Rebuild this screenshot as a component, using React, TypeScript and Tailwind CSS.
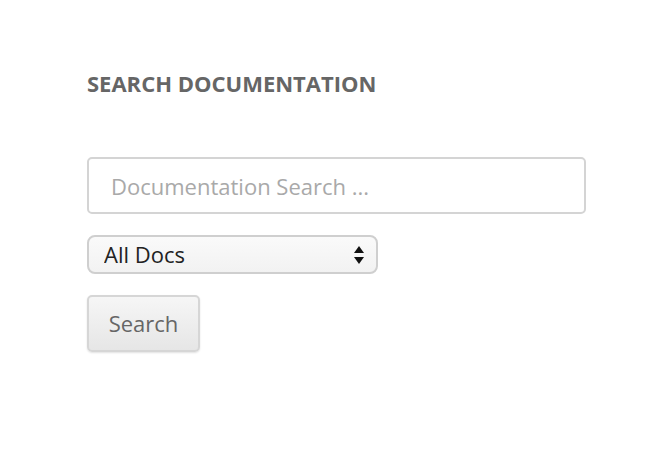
import React from 'react';

export default function App() {
  return (
    <div className="min-h-[454px] w-[656px] bg-white pl-[87px] pt-[66px] font-['Open_Sans',sans-serif]">
      <h2 className="text-[22px] font-bold uppercase leading-[34px] text-[#666666]">
        Search Documentation
      </h2>

      <form className="mt-[57px] flex flex-col items-start" onSubmit={(e) => e.preventDefault()}>
        <input
          type="text"
          placeholder="Documentation Search ..."
          className="h-[57px] w-[499px] rounded-[5px] border-2 border-[#d4d4d4] bg-white px-[22px] text-[22px] text-[#555] outline-none placeholder:text-[#a9a9a9]"
        />

        <div className="relative mt-[21px]">
          <select
            defaultValue="all"
            className="h-[39px] w-[291px] appearance-none rounded-[8px] border-2 border-[#cfcfcf] bg-gradient-to-b from-[#fafafa] to-[#f2f2f2] pl-[15px] text-[22px] text-[#222] outline-none"
          >
            <option value="all">All Docs</option>
          </select>
          {/* up / down arrows */}
          <svg
            className="pointer-events-none absolute right-[14px] top-[11px]"
            width="10"
            height="18"
            viewBox="0 0 10 18"
          >
            <path d="M5 0 L10 7 L0 7 Z" fill="#111" />
            <path d="M0 11 L10 11 L5 18 Z" fill="#111" />
          </svg>
        </div>

        <button
          type="submit"
          className="mt-[21px] h-[57px] w-[113px] rounded-[5px] border-2 border-[#d6d6d6] bg-gradient-to-b from-[#f6f6f6] to-[#e6e6e6] text-[22px] text-[#666] shadow-[0_1px_2px_rgba(0,0,0,0.12)]"
        >
          Search
        </button>
      </form>
    </div>
  );
}
